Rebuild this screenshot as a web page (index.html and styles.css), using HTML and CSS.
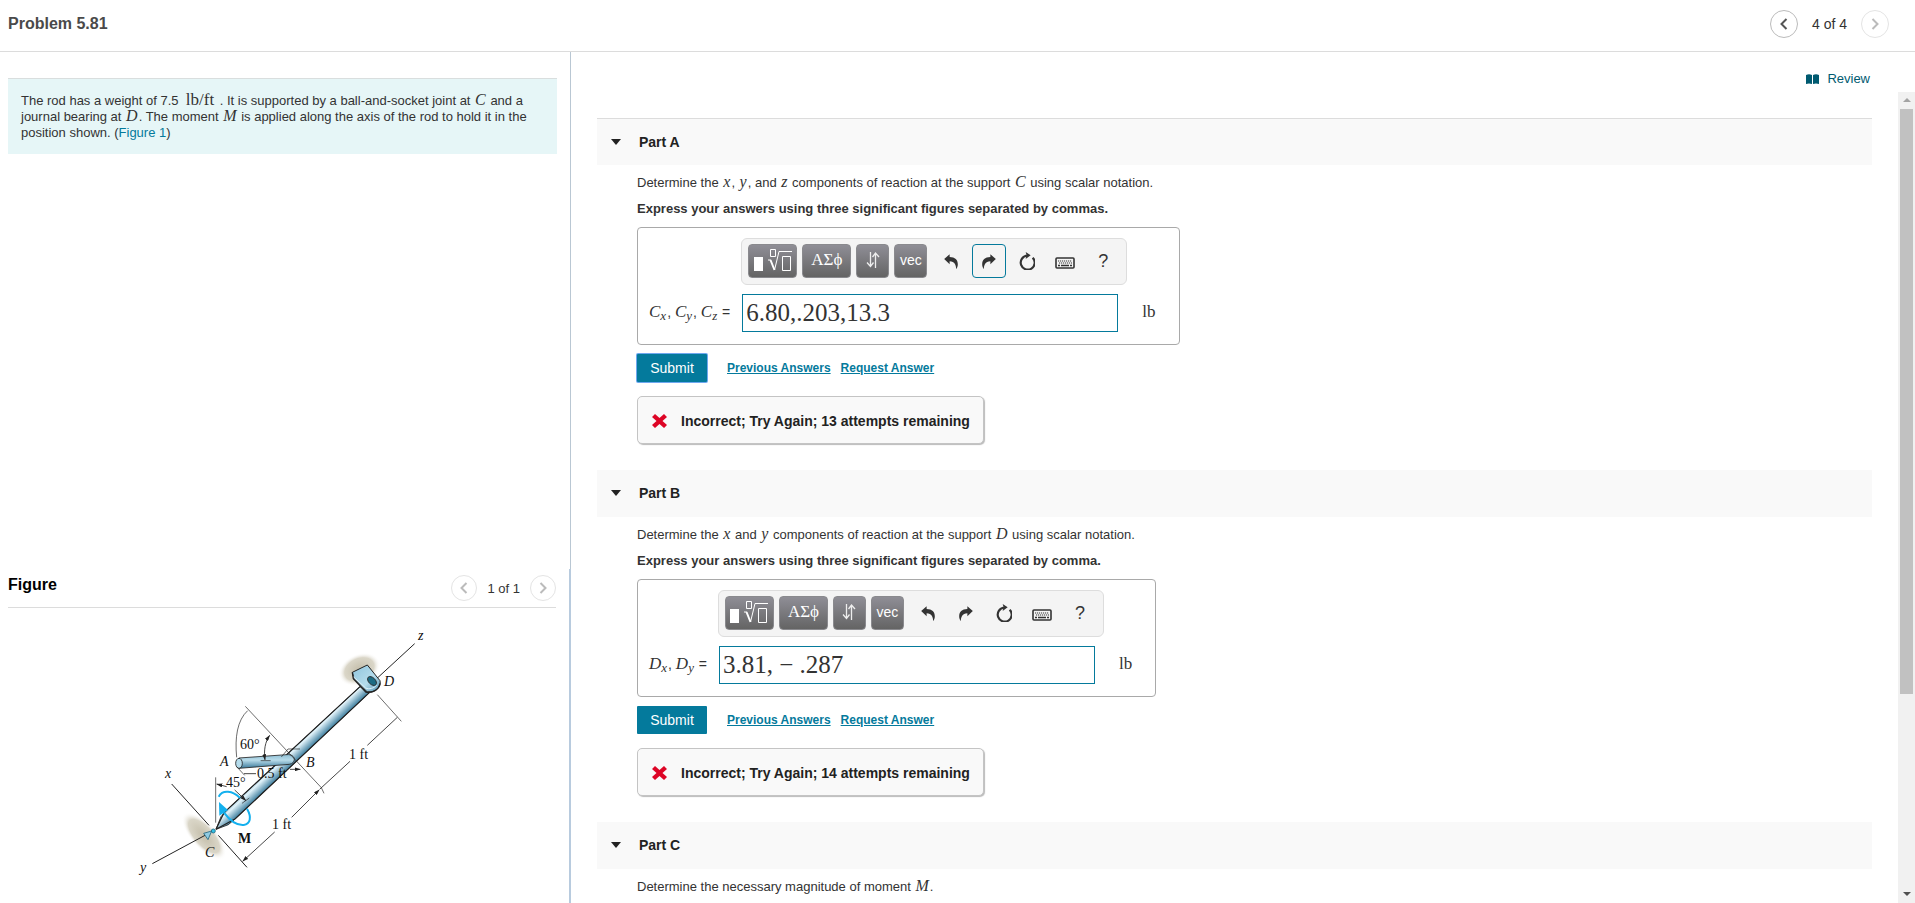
FILE: index.html
```html
<!DOCTYPE html>
<html lang="en">
<head>
<meta charset="utf-8">
<title>Problem 5.81</title>
<link rel="stylesheet" href="styles.css">
</head>
<body>
<svg class="sprite" aria-hidden="true">
  <symbol id="i-left" viewBox="0 0 8 12"><path d="M6.5 1 1.5 6l5 5" fill="none" stroke="currentColor" stroke-width="2"/></symbol>
  <symbol id="i-right" viewBox="0 0 8 12"><path d="M1.5 1l5 5-5 5" fill="none" stroke="currentColor" stroke-width="2"/></symbol>
  <symbol id="i-undo" viewBox="0 0 40 44"><path d="M0 15 16 1v8c16 0 24 9 24 21 0 6-2 11-5 14 0-12-4-22-19-23v9z" fill="currentColor"/></symbol>
  <symbol id="i-redo" viewBox="0 0 40 44"><path d="M40 15 24 1v8C8 9 0 18 0 30c0 6 2 11 5 14 0-12 4-22 19-23v9z" fill="currentColor"/></symbol>
  <symbol id="i-reset" viewBox="0 0 48 54"><path d="M41 17a21 21 0 1 1-17-6" fill="none" stroke="currentColor" stroke-width="6.5"/><path d="M20 0l15 10-15 11 3-11z" fill="currentColor"/></symbol>
  <symbol id="i-keys" viewBox="0 0 20 12"><rect x="1" y="1" width="18" height="10" rx="1" fill="none" stroke="currentColor" stroke-width="1.600"/><path d="M3 4h14M4 6h13" stroke="currentColor" stroke-width="1.200" stroke-dasharray="1.200 .8"/><path d="M3 8.500h2M6 8.500h8M15 8.500h2" stroke="currentColor" stroke-width="1.500"/></symbol>
  <symbol id="i-root" viewBox="0 0 38 24"><path d="M0 9h9v14H0z" fill="#fff"/><g fill="none" stroke="#fff"><path d="M16.500 1.500h5v7h-5zM28.500 8.500h8v14h-8z"/><path d="M14 12l3 0M25 3.500h13"/><path d="M16.500 12l4 10" stroke-width="2"/><path d="M20.500 22l4.500-18.500"/></g></symbol>
  <symbol id="i-swap" viewBox="0 0 14 18"><path d="M4.500 1v14M1 11.500l3.500 4 3-4M9.500 17V2M6.500 6l3-4 3.500 4" fill="none" stroke="#eee" stroke-width="1.300"/></symbol>
  <symbol id="i-cross" viewBox="0 0 15 14"><path d="M3 0l4.500 4L12 0l3 3-4.500 4 4.500 4-3 3-4.500-4L3 14l-3-3 4.500-4L0 3z" fill="#dd0526"/></symbol>
</svg>

<header class="topbar">
  <h1 class="topbar-title">Problem 5.81</h1>
  <nav class="pager">
    <button class="round" aria-label="Previous"><svg width="8" height="12"><use href="#i-left"/></svg></button>
    <span>4 of 4</span>
    <button class="round off" aria-label="Next"><svg width="8" height="12"><use href="#i-right"/></svg></button>
  </nav>
</header>

<main class="layout">
  <aside class="side">
    <section class="prompt-pane">
      <p class="prompt">The rod has a weight of 7.5 &nbsp;<span class="unit-inline">lb/ft</span>&nbsp;. It is supported by a ball-and-socket joint at <i class="m">C</i> and a journal bearing at <i class="m">D</i>. The moment <i class="m">M</i> is applied along the axis of the rod to hold it in the position shown. (<a href="#figure">Figure 1</a>)</p>
    </section>
    <section class="figure-pane" id="figure">
      <div class="figure-head">
        <h2>Figure</h2>
        <nav class="pager small">
          <button class="round off" aria-label="Previous figure"><svg width="8" height="12"><use href="#i-left"/></svg></button>
          <span>1 of 1</span>
          <button class="round off" aria-label="Next figure"><svg width="8" height="12"><use href="#i-right"/></svg></button>
        </nav>
      </div>
      <svg class="diagram" width="320" height="260" viewBox="0 0 320 260" role="img" aria-label="Rod supported at C and D">
        <defs>
          <linearGradient id="rod" gradientUnits="userSpaceOnUse" x1="500" y1="385" x2="533" y2="420"><stop offset="0" stop-color="#5d9cba"/><stop offset=".4" stop-color="#e2f3fa"/><stop offset="1" stop-color="#3f7f9f"/></linearGradient>
          <linearGradient id="arm" x1="0" y1="0" x2="0" y2="1"><stop offset="0" stop-color="#8fc0d6"/><stop offset=".4" stop-color="#b9dcea"/><stop offset="1" stop-color="#39799a"/></linearGradient>
          <linearGradient id="lug" x1="0" y1="0" x2="1" y2="1"><stop offset="0" stop-color="#8fc4dc"/><stop offset=".6" stop-color="#b5dcec"/><stop offset="1" stop-color="#4e8fae"/></linearGradient>
          <radialGradient id="shade"><stop offset="0" stop-color="#c4beaa"/><stop offset=".7" stop-color="#dad6c8"/><stop offset="1" stop-color="#fff" stop-opacity="0"/></radialGradient>
          <marker id="tip" viewBox="0 0 18 12" refX="17" refY="6" markerWidth="18" markerHeight="12" markerUnits="userSpaceOnUse" orient="auto-start-reverse"><path d="M0 0l18 6-18 6z" fill="#222"/></marker>
        </defs>
        <g transform="scale(.33333)" fill="none" stroke="#222" stroke-width="2.500">
          <ellipse cx="718" cy="148" rx="66" ry="46" transform="rotate(-25 718 148)" fill="url(#shade)" stroke="none"/>
          <ellipse cx="252" cy="648" rx="90" ry="38" transform="rotate(48 252 648)" fill="url(#shade)" stroke="none"/>
          <path d="M155 492l112 124M97 731l160-86M770 176L884 71" stroke-width="3"/>
          <path d="M295 646l86 96" stroke-width="3"/>
          <path d="M720 200L325 566 303 590 288 628 325 614 345 597 748 218z" fill="url(#rod)"/>
          <path d="M720 200L312 578 288 628M748 218L345 597l-57 31" stroke-width="3.500"/>
          <path d="M697 157l45-22 38 47c5 20-14 36-38 34l-40-40z" fill="url(#lug)" stroke-width="3"/>
          <path d="M697 157l3 19 37 40c18 3 39-4 43-26" stroke-width="4"/>
          <path d="M701 171l36 33c10 5 25 1 33-8" stroke="#ddf0f8" stroke-width="3"/>
          <ellipse cx="756" cy="183" rx="16" ry="10" transform="rotate(45 756 183)" fill="#1d6b83"/>
          <path d="M357 414l143-10c28-3 30 26 8 29l-151 12z" fill="url(#arm)"/>
          <ellipse cx="357" cy="430" rx="10" ry="15" fill="#b5dcec"/>
          <path d="M376 259l228 244 8 17M350 412c-6-60 2-112 33-140M484 411l20-24h36M772 224l72 80" stroke-width="2"/>
          <path d="M435 420c-4-28 0-54 14-74" marker-start="url(#tip)" marker-end="url(#tip)"/>
          <path d="M422 422h30M287 608V472M350 440l24 26" stroke-width="2"/>
          <path d="M408 461h-36M510 448h31" marker-end="url(#tip)"/>
          <path d="M290 492l30 8" marker-start="url(#tip)"/>
          <path d="M344 510l34 32" marker-end="url(#tip)"/>
          <path d="M366 550l22-16" stroke-width="2"/>
          <path d="M742 376l90-84M515 592l83-83" marker-end="url(#tip)"/>
          <path d="M690 424l-90 83M464 636l-96 88" marker-end="url(#tip)"/>
          <path d="M296 530c12-22 42-18 64 4M381 566c15 26 10 46-10 49-24 2-42-14-59-37" stroke="#14b0ee" stroke-width="6"/>
          <path d="M297 546l27 24-26 17z" fill="#14b0ee" stroke="none"/>
          <path d="M251 640l24-7-11 26z" fill="#8fcbe2" stroke="#26677f"/><circle cx="280" cy="633" r="6" fill="#31c0e4" stroke="#26677f"/>
        </g>
        <g class="dia-text">
          <g class="dia-var"><text x="298" y="20">z</text><text x="264" y="66">D</text><text x="100" y="146">A</text><text x="186" y="147">B</text><text x="45" y="158">x</text><text x="85" y="237">C</text><text x="20" y="252">y</text></g>
          <text x="120" y="129">60°</text><text x="106" y="167">45°</text><text x="137" y="158">0.5 ft</text><text x="229" y="139">1 ft</text><text x="152" y="209">1 ft</text><text x="118" y="223" class="dia-bold">M</text>
        </g>
      </svg>
    </section>
  </aside>

  <section class="work">
    <div class="review-row"><a class="review" href="#review"><svg width="13" height="10" viewBox="0 0 13 10" aria-hidden="true"><path d="M0 1q3-1.500 6 0v9q-3-1-6 0zM7 1q3-1.500 6 0v9q-3-1-6 0z" fill="#005a70"/></svg>Review</a></div>
    <div class="scroll-area">
      <div class="parts">
        <article class="part">
          <h2 class="part-head">Part A</h2>
          <div class="part-body">
            <p class="ask">Determine the <i class="m">x</i>, <i class="m">y</i>, and <i class="m">z</i> components of reaction at the support <i class="m">C</i> using scalar notation.</p>
            <p class="ask strong">Express your answers using three significant figures separated by commas.</p>
            <div class="answer">
              <div class="tools">
                <div class="tool-group">
                  <button class="dark wide" aria-label="Templates"><svg width="38" height="24"><use href="#i-root"/></svg></button>
                  <button class="dark wide greek">ΑΣϕ</button>
                  <button class="dark" aria-label="Arrows"><svg width="14" height="18"><use href="#i-swap"/></svg></button>
                  <button class="dark">vec</button>
                </div>
                <div class="tool-group plain-group">
                  <button class="plain" aria-label="Undo"><svg width="14" height="15"><use href="#i-undo"/></svg></button>
                  <button class="plain current" aria-label="Redo"><svg width="14" height="15"><use href="#i-redo"/></svg></button>
                  <button class="plain" aria-label="Reset"><svg width="16" height="18"><use href="#i-reset"/></svg></button>
                  <button class="plain low" aria-label="Keyboard"><svg width="20" height="12"><use href="#i-keys"/></svg></button>
                  <button class="plain">?</button>
                </div>
              </div>
              <label class="vars" for="ans-a"><i>C<sub>x</sub></i>, <i>C<sub>y</sub></i>, <i>C<sub>z</sub></i> =</label>
              <input class="field" id="ans-a" type="text" value="6.80,.203,13.3">
              <span class="unit">lb</span>
            </div>
            <div class="actions"><button class="submit focused">Submit</button><a href="#prev-a">Previous Answers</a><a href="#req-a">Request Answer</a></div>
            <div class="feedback"><svg width="15" height="14" aria-hidden="true"><use href="#i-cross"/></svg>Incorrect; Try Again; 13 attempts remaining</div>
          </div>
        </article>
        <article class="part">
          <h2 class="part-head">Part B</h2>
          <div class="part-body">
            <p class="ask">Determine the <i class="m">x</i> and <i class="m">y</i> components of reaction at the support <i class="m">D</i> using scalar notation.</p>
            <p class="ask strong">Express your answers using three significant figures separated by comma.</p>
            <div class="answer">
              <div class="tools">
                <div class="tool-group">
                  <button class="dark wide" aria-label="Templates"><svg width="38" height="24"><use href="#i-root"/></svg></button>
                  <button class="dark wide greek">ΑΣϕ</button>
                  <button class="dark" aria-label="Arrows"><svg width="14" height="18"><use href="#i-swap"/></svg></button>
                  <button class="dark">vec</button>
                </div>
                <div class="tool-group plain-group">
                  <button class="plain" aria-label="Undo"><svg width="14" height="15"><use href="#i-undo"/></svg></button>
                  <button class="plain" aria-label="Redo"><svg width="14" height="15"><use href="#i-redo"/></svg></button>
                  <button class="plain" aria-label="Reset"><svg width="16" height="18"><use href="#i-reset"/></svg></button>
                  <button class="plain low" aria-label="Keyboard"><svg width="20" height="12"><use href="#i-keys"/></svg></button>
                  <button class="plain">?</button>
                </div>
              </div>
              <label class="vars" for="ans-b"><i>D<sub>x</sub></i>, <i>D<sub>y</sub></i> =</label>
              <input class="field" id="ans-b" type="text" value="3.81, − .287">
              <span class="unit">lb</span>
            </div>
            <div class="actions"><button class="submit">Submit</button><a href="#prev-b">Previous Answers</a><a href="#req-b">Request Answer</a></div>
            <div class="feedback"><svg width="15" height="14" aria-hidden="true"><use href="#i-cross"/></svg>Incorrect; Try Again; 14 attempts remaining</div>
          </div>
        </article>
        <article class="part">
          <h2 class="part-head">Part C</h2>
          <div class="part-body">
            <p class="ask">Determine the necessary magnitude of moment <i class="m">M</i>.</p>
          </div>
        </article>
      </div>
      <div class="bar" aria-hidden="true"><span class="bar-up"></span><span class="bar-thumb"></span><span class="bar-down"></span></div>
    </div>
  </section>
</main>
</body>
</html>
```
FILE: styles.css
```css
* { box-sizing: border-box; }
body {
  margin: 0;
  height: 100vh;
  display: flex;
  flex-direction: column;
  overflow: hidden;
  background: #fff;
  color: #333;
  font: 13px/16px "Liberation Sans", Arial, sans-serif;
}
h1, h2, p { margin: 0; }
button { font-family: inherit; padding: 0; cursor: pointer; }
a { color: #047a9c; text-decoration: none; }
.sprite { display: none; }

.topbar {
  height: 52px;
  flex: none;
  display: flex;
  justify-content: space-between;
  align-items: flex-start;
  padding: 10px 26px 0 8px;
  border-bottom: 1px solid #dcdcdc;
}
.topbar-title { font-size: 16px; line-height: 28px; color: #4a4a4a; }
.pager { display: flex; align-items: center; gap: 14px; font-size: 14px; line-height: 28px; color: #333; }
.round {
  width: 28px;
  height: 28px;
  display: flex;
  align-items: center;
  justify-content: center;
  border: 1px solid #bbb;
  border-radius: 50%;
  background: #fff;
  color: #555;
}
.round.off { border-color: #e4e4e4; color: #bbb; }
.small { gap: 10px; font-size: 13px; }
.small span { padding-top: 2px; }
.small .round { width: 26px; height: 26px; }

.layout { flex: 1; min-height: 0; display: flex; }
.side { width: 571px; flex: none; display: flex; flex-direction: column; }
.prompt-pane { flex: 1; padding: 26px 13px 0 8px; border-right: 1px solid #b9c7d3; }
.prompt { padding: 14px 20px 13px 13px; background: #e6f6f7; border-top: 1px solid #d9dede; }
.m { font: italic 16px/14px "Liberation Serif", "Times New Roman", serif; padding: 0 1px; }
.unit-inline { font: 17px/14px "Liberation Serif", "Times New Roman", serif; padding-right: 2px; }
.figure-pane { height: 334px; padding: 5px 13px 0 8px; border-right: 2px solid #b8cbde; }
.figure-head { display: flex; justify-content: space-between; height: 34px; border-bottom: 1px solid #dcdcdc; }
.figure-head h2 { font-size: 16px; line-height: 22px; color: #000; }
.figure-head .pager { height: 28px; }
.diagram { display: block; margin: 12px 0 0 112px; }
.dia-text { font: 14px "Liberation Serif", "Times New Roman", serif; fill: #111; }
.dia-var { font-style: italic; }
.dia-bold { font-weight: bold; }

.work { flex: 1; min-width: 0; display: flex; flex-direction: column; }
.review-row { height: 40px; flex: none; display: flex; justify-content: flex-end; padding: 19px 45px 0 0; }
.review { display: flex; align-items: center; gap: 8px; height: 16px; font-size: 13px; color: #005a70; }
.scroll-area { flex: 1; min-height: 0; display: flex; overflow: hidden; }
.parts { flex: 1; padding: 26px 26px 0 26px; }
.bar {
  width: 17px;
  display: flex;
  flex-direction: column;
  align-items: center;
  background: #f1f1f1;
}
.bar-up, .bar-down { width: 0; border: 4px solid transparent; }
.bar-up { margin: 2px 0 7px; border-bottom-color: #a3a3a3; }
.bar-thumb { width: 13px; height: 585px; background: #c1c1c1; }
.bar-down { margin: auto 0 3px; border-top-color: #505050; }

.part-head {
  display: flex;
  align-items: center;
  gap: 18px;
  height: 47px;
  padding: 0 0 1px 14px;
  background: #f9f9f9;
  color: #222;
  font-size: 14px;
}
.part-head::before { content: ""; border: 5px solid transparent; border-top: 6px solid #222; border-bottom: 0; }
.part:first-child .part-head { border-top: 1px solid #dcdcdc; padding-bottom: 0; }
.part-body { height: 305px; padding: 9px 0 0 40px; }
.ask { line-height: 18px; margin-bottom: 8px; }
.strong { font-weight: bold; margin-bottom: 9px; }

.answer {
  display: inline-grid;
  grid-template-columns: auto auto auto;
  align-items: center;
  row-gap: 9px;
  padding: 10px 23px 12px 11px;
  border: 1px solid #a9a9a9;
  border-radius: 4px;
  vertical-align: top;
}
.tools {
  grid-column: 2;
  display: flex;
  align-items: center;
  gap: 7px;
  width: 386px;
  height: 47px;
  padding: 0 0 1px 6px;
  border: 1px solid #ddd;
  border-radius: 6px;
  background: #f4f4f4;
}
.tool-group { display: flex; gap: 5px; }
.plain-group { gap: 4px; }
.dark, .plain { display: flex; align-items: center; justify-content: center; height: 34px; border-radius: 4px; }
.dark {
  width: 33px;
  padding-bottom: 2px;
  border: 1px solid #8a8a8e;
  background: linear-gradient(#8f8e96, #646464);
  color: #fff;
  font-size: 14px;
}
.wide { width: 49px; }
.greek { font: 17px "Liberation Serif", "Times New Roman", serif; }
.plain { width: 34px; border: 1px solid transparent; background: none; color: #333; font-size: 18px; }
.low { padding-top: 4px; }
.current { border-color: #047a9c; }
.vars {
  grid-column: 1;
  padding: 0 11px 2px 0;
  font-size: 14px;
  line-height: 20px;
}
.vars i { font: italic 17px/16px "Liberation Serif", "Times New Roman", serif; padding-right: 1px; }
.vars sub { font-size: 13px; line-height: 0; vertical-align: -3px; }
.field {
  width: 376px;
  height: 38px;
  margin-left: 1px;
  padding: 0 3px;
  border: 1px solid #047a9c;
  background: #fff;
  color: #333;
  font: 25px "Liberation Serif", "Times New Roman", serif;
}
.unit { font: 17px "Liberation Serif", "Times New Roman", serif; padding: 0 0 2px 15px; }

.actions { display: flex; align-items: flex-start; gap: 10px; height: 51px; padding-top: 9px; }
.actions a { font-size: 12px; font-weight: bold; text-decoration: underline; line-height: 28px; }
.submit {
  width: 70px;
  height: 28px;
  margin-right: 10px;
  border: 0;
  border-radius: 1px;
  background: #047a9c;
  color: #fff;
  font-size: 14px;
}
.focused { box-shadow: 0 0 0 1px #6fa8f0; }
.feedback {
  display: inline-flex;
  align-items: center;
  gap: 14px;
  height: 48px;
  padding: 1px 13px 0 14px;
  border: 1px solid #c4c4c4;
  border-radius: 5px;
  background: #f9f9f9;
  box-shadow: 1px 1px 1px #bbb;
  color: #222;
  font-size: 14px;
  font-weight: bold;
}
```
